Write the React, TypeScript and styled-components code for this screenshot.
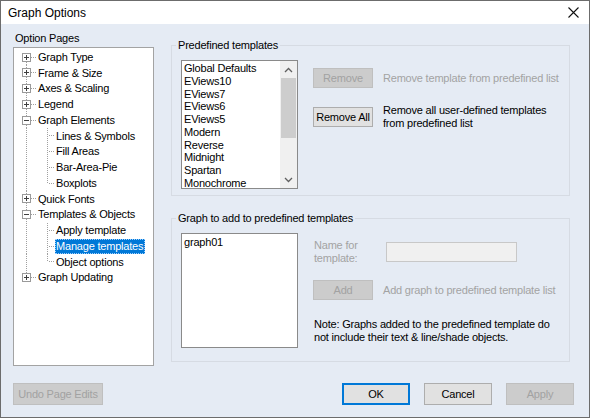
import React from "react";
import styled, { createGlobalStyle, css } from "styled-components";

const GlobalStyle = createGlobalStyle`
  html, body { margin: 0; padding: 0; background: #e5ebf4; }
  body {
    width: 590px; height: 418px; overflow: hidden;
    font-family: "Liberation Sans", Arial, sans-serif;
    font-size: 11px; letter-spacing: -0.2px; color: #000;
  }
  * { box-sizing: border-box; }
`;

const Window = styled.div`
  width: 590px; height: 418px;
  border: 1px solid #6c6c6c;
  background: #e5ebf4;
  display: flex; flex-direction: column;
`;

const TitleBar = styled.div`
  height: 23px; flex: none; background: #ffffff;
  display: flex; align-items: center; justify-content: space-between;
  padding: 0 10px 0 7px;
`;

const TitleText = styled.span`
  font-size: 12px; letter-spacing: 0; color: #000;
`;

const Body = styled.div`
  flex: 1; display: flex; flex-direction: column;
`;

const Main = styled.div`
  display: grid; grid-template-columns: 141px 399px; column-gap: 17px;
  padding-left: 12px;
`;

const LeftColumn = styled.div`
  padding-top: 8px; display: flex; flex-direction: column;
`;

const PaneLabel = styled.div`
  height: 13px; line-height: 13px; padding-left: 2px;
`;

const TreeBox = styled.div`
  margin-top: 2px; height: 319px; background: #fff;
  border: 1px solid #a3a3a3; padding-top: 1.5px;
`;

const TreeRow = styled.div`
  height: 15.75px; display: flex; align-items: center;
`;

const TreeGutter = styled.svg`
  flex: none; height: 15.75px; display: block;
`;

const TreeLabel = styled.span<{ $selected?: boolean }>`
  height: 15px; line-height: 15px; padding: 0 2px 0 1px; white-space: nowrap; color: #000;
  ${p => p.$selected && css`
    background: #0078d7; color: #fff; outline: 1px dotted #9fd0ff; outline-offset: -1px;
  `}
`;

const RightColumn = styled.div`
  padding-top: 15px; display: flex; flex-direction: column; gap: 16px;
`;

const Group = styled.fieldset<{ $padBottom: number }>`
  margin: 0; min-width: 0; width: 399px;
  border: 1px solid #d6dbe3;
  padding: 8px 9px ${p => p.$padBottom}px 9px;
  display: flex; gap: 15px;
`;

const GroupLegend = styled.legend`
  margin-left: -5px; padding: 0 2px; line-height: 13px; height: 13px;
`;

const ListBox = styled.div<{ $height: number }>`
  width: 117px; height: ${p => p.$height}px; flex: none;
  background: #fff; border: 1px solid #8a8a8a;
  display: flex; overflow: hidden;
`;

const ListItems = styled.div<{ $padTop?: number }>`
  flex: 1; padding: ${p => p.$padTop ?? 1}px 0 0 2px; overflow: hidden;
`;

const ListItem = styled.div<{ $tall?: boolean }>`
  height: ${p => (p.$tall ? 13 : 12.75)}px; line-height: 13px; white-space: nowrap;
`;

const ScrollBar = styled.div`
  width: 17px; flex: none; background: #f0f0f0; display: flex; flex-direction: column;
`;

const ScrollArrow = styled.div`
  height: 17px; flex: none; display: flex; align-items: center; justify-content: center;
`;

const ScrollTrack = styled.div`
  flex: 1; padding: 0 1px;
`;

const ScrollThumb = styled.div`
  height: 60px; background: #cdcdcd;
`;

const Actions = styled.div<{ $top: number }>`
  padding-top: ${p => p.$top}px; display: flex; flex-direction: column;
`;

const ActionRow = styled.div<{ $gap?: number }>`
  display: flex; align-items: center; gap: 10px; margin-top: ${p => p.$gap ?? 0}px;
`;

const Button = styled.button<{ $w: number; $h: number; $default?: boolean }>`
  width: ${p => p.$w}px; height: ${p => p.$h}px; flex: none;
  margin: 0; padding: 0;
  font-family: inherit; font-size: 11px; letter-spacing: -0.2px; color: #000;
  background: #e1e1e1; border: 1px solid #adadad;
  ${p => p.$default && css`
    border-color: #0078d7; box-shadow: inset 0 0 0 1px #0078d7;
  `}
  &:disabled { background: #cccccc; border-color: #bfbfbf; color: #a2a2a2; }
`;

const Desc = styled.div<{ $disabled?: boolean }>`
  line-height: 13px; white-space: nowrap;
  color: ${p => (p.$disabled ? "#a3a3a3" : "#000")};
`;

const NameRow = styled.div`
  display: flex; align-items: center; margin-top: 6px;
`;

const NameLabel = styled.div`
  width: 73px; padding-left: 1px; line-height: 13px; color: #a3a3a3;
`;

const NameInput = styled.div`
  width: 131px; height: 20px; background: #f0f0f0; border: 1px solid #c8c8c8;
`;

const Note = styled.div`
  margin-top: 18px; padding-left: 1px; line-height: 13px; white-space: nowrap;
`;

const Footer = styled.div`
  margin-top: auto; display: flex; align-items: center;
  padding: 0 15px 12px 12px;
`;

const FooterRight = styled.div`
  margin-left: auto; display: flex; gap: 14px;
`;

type Node = { label: string; depth: 0 | 1; expanded?: boolean; first?: boolean; last?: boolean; lastChild?: boolean; selected?: boolean };

const tree: Node[] = [
  { label: "Graph Type", depth: 0, first: true },
  { label: "Frame & Size", depth: 0 },
  { label: "Axes & Scaling", depth: 0 },
  { label: "Legend", depth: 0 },
  { label: "Graph Elements", depth: 0, expanded: true },
  { label: "Lines & Symbols", depth: 1 },
  { label: "Fill Areas", depth: 1 },
  { label: "Bar-Area-Pie", depth: 1 },
  { label: "Boxplots", depth: 1, lastChild: true },
  { label: "Quick Fonts", depth: 0 },
  { label: "Templates & Objects", depth: 0, expanded: true },
  { label: "Apply template", depth: 1 },
  { label: "Manage templates", depth: 1, selected: true },
  { label: "Object options", depth: 1, lastChild: true },
  { label: "Graph Updating", depth: 0, last: true },
];

const DOT = "#a0a0a0";

function Gutter({ node }: { node: Node }) {
  const dash = { stroke: DOT, strokeWidth: 1, strokeDasharray: "1 1", shapeRendering: "crispEdges" as const };
  if (node.depth === 0) {
    return (
      <TreeGutter width={23} viewBox="0 0 23 15.75">
        {!node.first && <line x1={12.5} y1={0} x2={12.5} y2={3} {...dash} />}
        {!node.last && <line x1={12.5} y1={12} x2={12.5} y2={15.75} {...dash} />}
        <line x1={17} y1={7.5} x2={22} y2={7.5} {...dash} />
        <rect x={8.5} y={3.5} width={8} height={8} fill="#fff" stroke="#9a9a9a" shapeRendering="crispEdges" />
        <line x1={10} y1={7.5} x2={15} y2={7.5} stroke="#404040" shapeRendering="crispEdges" />
        {!node.expanded && <line x1={12.5} y1={5} x2={12.5} y2={10} stroke="#404040" shapeRendering="crispEdges" />}
      </TreeGutter>
    );
  }
  return (
    <TreeGutter width={41} viewBox="0 0 41 15.75">
      <line x1={12.5} y1={0} x2={12.5} y2={15.75} {...dash} />
      <line x1={33.5} y1={0} x2={33.5} y2={node.lastChild ? 8 : 15.75} {...dash} />
      <line x1={35} y1={7.5} x2={41} y2={7.5} {...dash} />
    </TreeGutter>
  );
}

function Chevron({ up }: { up?: boolean }) {
  return (
    <svg width="9" height="6" viewBox="0 0 9 6">
      <polyline
        points={up ? "1,5 4.5,1.5 8,5" : "1,1 4.5,4.5 8,1"}
        fill="none" stroke="#606060" strokeWidth="1.3"
      />
    </svg>
  );
}

const templates = ["Global Defaults", "EViews10", "EViews7", "EViews6", "EViews5", "Modern", "Reverse", "Midnight", "Spartan", "Monochrome"];

export default function App() {
  return (
    <>
      <GlobalStyle />
      <Window>
        <TitleBar>
          <TitleText>Graph Options</TitleText>
          <svg width="11" height="11" viewBox="0 0 11 11">
            <path d="M0.5 0.5 L10.5 10.5 M10.5 0.5 L0.5 10.5" stroke="#111" strokeWidth="1.1" fill="none" />
          </svg>
        </TitleBar>
        <Body>
          <Main>
            <LeftColumn>
              <PaneLabel>Option Pages</PaneLabel>
              <TreeBox>
                {tree.map(n => (
                  <TreeRow key={n.label}>
                    <Gutter node={n} />
                    <TreeLabel $selected={n.selected}>{n.label}</TreeLabel>
                  </TreeRow>
                ))}
              </TreeBox>
            </LeftColumn>
            <RightColumn>
              <Group $padBottom={6}>
                <GroupLegend>Predefined templates</GroupLegend>
                <ListBox $height={129}>
                  <ListItems>
                    {templates.map(t => (
                      <ListItem key={t}>{t}</ListItem>
                    ))}
                  </ListItems>
                  <ScrollBar>
                    <ScrollArrow><Chevron up /></ScrollArrow>
                    <ScrollTrack><ScrollThumb /></ScrollTrack>
                    <ScrollArrow><Chevron /></ScrollArrow>
                  </ScrollBar>
                </ListBox>
                <Actions $top={8}>
                  <ActionRow>
                    <Button $w={60} $h={20} disabled>Remove</Button>
                    <Desc $disabled>Remove template from predefined list</Desc>
                  </ActionRow>
                  <ActionRow $gap={16}>
                    <Button $w={60} $h={20}>Remove All</Button>
                    <Desc>Remove all user-defined templates<br />from predefined list</Desc>
                  </ActionRow>
                </Actions>
              </Group>
              <Group $padBottom={13}>
                <GroupLegend>Graph to add to predefined templates</GroupLegend>
                <ListBox $height={115}>
                  <ListItems $padTop={2}>
                    <ListItem $tall>graph01</ListItem>
                  </ListItems>
                </ListBox>
                <Actions $top={0}>
                  <NameRow>
                    <NameLabel>Name for<br />template:</NameLabel>
                    <NameInput />
                  </NameRow>
                  <ActionRow $gap={15}>
                    <Button $w={60} $h={20} disabled>Add</Button>
                    <Desc $disabled>Add graph to predefined template list</Desc>
                  </ActionRow>
                  <Note>Note: Graphs added to the predefined template do<br />not include their text &amp; line/shade objects.</Note>
                </Actions>
              </Group>
            </RightColumn>
          </Main>
          <Footer>
            <Button $w={90} $h={22} disabled>Undo Page Edits</Button>
            <FooterRight>
              <Button $w={68} $h={22} $default>OK</Button>
              <Button $w={68} $h={22}>Cancel</Button>
              <Button $w={68} $h={22} disabled>Apply</Button>
            </FooterRight>
          </Footer>
        </Body>
      </Window>
    </>
  );
}
